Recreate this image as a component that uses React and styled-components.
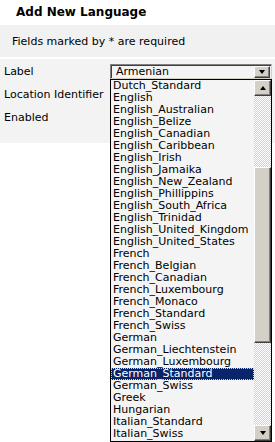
import React from 'react';
import styled, { createGlobalStyle } from 'styled-components';

const GlobalStyle = createGlobalStyle`
    html, body {
        margin: 0;
        padding: 0;
        background: #ffffff;
        overflow: hidden;
    }
    body {
        font-family: "DejaVu Sans", Verdana, sans-serif;
        font-size: 11px;
        color: #000000;
    }
`;

const languages = [
    'Dutch_Standard', 'English', 'English_Australian', 'English_Belize', 'English_Canadian',
    'English_Caribbean', 'English_Irish', 'English_Jamaika', 'English_New_Zealand',
    'English_Phillippins', 'English_South_Africa', 'English_Trinidad', 'English_United_Kingdom',
    'English_United_States', 'French', 'French_Belgian', 'French_Canadian', 'French_Luxembourg',
    'French_Monaco', 'French_Standard', 'French_Swiss', 'German', 'German_Liechtenstein',
    'German_Luxembourg', 'German_Standard', 'German_Swiss', 'Greek', 'Hungarian',
    'Italian_Standard', 'Italian_Swiss'
];

const Page = styled.div`
    position: relative;
    width: 275px;
    height: 442px;
`;

const Heading = styled.h2`
    margin: 0;
    height: 25px;
    padding-left: 16px;
    font-size: 12px;
    font-weight: bold;
    line-height: 24px;
`;

const Notice = styled.div`
    height: 32px;
    padding-left: 12px;
    background: #f1f1f1;
    line-height: 33px;
    margin-bottom: 2px;
`;

const Form = styled.div`
    background: #f3f3f3;
    height: 84px;
    padding-top: 1px;
    box-sizing: border-box;
`;

const Row = styled.div`
    display: flex;
    align-items: center;
    height: 23px;
    padding-left: 4px;
`;

const Label = styled.div`
    width: 106px;
    flex-shrink: 0;
`;

const SelectBox = styled.div`
    display: flex;
    align-items: center;
    justify-content: space-between;
    width: 162px;
    height: 15px;
    margin-top: -1px;
    box-sizing: border-box;
    border: 1px solid #808080;
    border-right-color: #d4d0c8;
    border-bottom-color: #d4d0c8;
    box-shadow: inset 1px 1px 0 #404040;
    background: #f4f4f4;
    padding: 1px 1px 0 5px;
    line-height: 12px;
`;

const Button = styled.div`
    width: 16px;
    height: 12px;
    box-sizing: border-box;
    background: #d4d0c8;
    border: 1px solid;
    border-color: #ffffff #404040 #404040 #ffffff;
    box-shadow: inset -1px -1px 0 #808080;
    display: flex;
    align-items: center;
    justify-content: center;
`;

const ScrollButton = styled(Button)`
    width: 17px;
    height: 16px;
    flex-shrink: 0;
`;

const Arrow = styled.div`
    width: 0;
    height: 0;
    border-left: 3.5px solid transparent;
    border-right: 3.5px solid transparent;
    ${(p) => (p.$up ? 'border-bottom: 4px solid #000;' : 'border-top: 4px solid #000;')}
    margin-top: ${(p) => (p.$up ? '-1px' : '0')};
`;

const Dropdown = styled.div`
    position: absolute;
    left: 110px;
    top: 79px;
    width: 162px;
    height: 363px;
    box-sizing: border-box;
    border: 1px solid #000000;
    background: #f4f4f4;
    display: flex;
`;

const Options = styled.div`
    flex: 1;
    min-width: 0;
`;

const Option = styled.div`
    height: 12px;
    line-height: 12px;
    padding-left: 2px;
    white-space: nowrap;
    overflow: hidden;
    background: ${(p) => (p.$selected ? '#0a246a' : 'transparent')};
    color: ${(p) => (p.$selected ? '#ffffff' : '#000000')};
    outline: ${(p) => (p.$selected ? '1px dotted #d4d0c8' : 'none')};
    outline-offset: -1px;
`;

const Scrollbar = styled.div`
    width: 17px;
    display: flex;
    flex-direction: column;
    background: repeating-conic-gradient(#d4d0c8 0 25%, #ffffff 0 50%) 0 0 / 2px 2px;
`;

const Track = styled.div`
    flex: 1;
    padding-top: 71px;
    padding-bottom: 82px;
    display: flex;
`;

const Thumb = styled(Button)`
    width: 17px;
    height: auto;
    flex: 1;
`;

export default function App() {
    return (
        <Page>
            <GlobalStyle />
            <Heading>Add New Language</Heading>
            <Notice>Fields marked by * are required</Notice>
            <Form>
                <Row>
                    <Label>Label</Label>
                    <SelectBox>
                        <span>Armenian</span>
                        <Button><Arrow /></Button>
                    </SelectBox>
                </Row>
                <Row>
                    <Label>Location Identifier</Label>
                </Row>
                <Row>
                    <Label>Enabled</Label>
                </Row>
            </Form>
            <Dropdown>
                <Options>
                    {languages.map((name) => (
                        <Option key={name} $selected={name === 'German_Standard'}>{name}</Option>
                    ))}
                </Options>
                <Scrollbar>
                    <ScrollButton><Arrow $up /></ScrollButton>
                    <Track><Thumb /></Track>
                    <ScrollButton><Arrow /></ScrollButton>
                </Scrollbar>
            </Dropdown>
        </Page>
    );
}
